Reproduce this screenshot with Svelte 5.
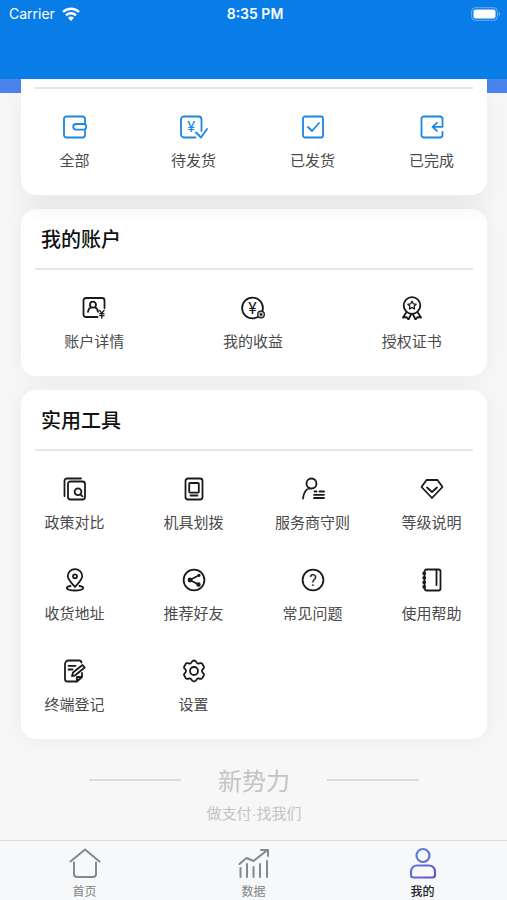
<script>
  // circle as a path, so every icon stays a plain list of path data
  const c = (x, y, r) => `M${x - r} ${y}a${r} ${r} 0 1 0 ${2 * r} 0a${r} ${r} 0 1 0 ${-2 * r} 0z`;

  // 24x24 icons: line = stroked, solid = filled, sign = character inside the icon
  const icons = {
    wallet: { line: 'M22 8V4a2.500 2.500 0 0 0-2.500-2.500H3.500A2.500 2.500 0 0 0 1 4v16a2.500 2.500 0 0 0 2.500 2.500h16A2.500 2.500 0 0 0 22 20v-4M13 9h7.500a2.800 2.800 0 0 1 0 5.600H13a2.800 2.800 0 0 1 0-5.600z' },
    pending: { line: 'M15.500 22.500H4A3 3 0 0 1 1 19.500v-15a3 3 0 0 1 3-3h14.500a3 3 0 0 1 3 3V16M16 17.500l5 5L27 14', sign: ['¥', 11.3, 17, 15], wide: true },
    shipped: { line: 'M4 1.500h16a2 2 0 0 1 2 2v17a2 2 0 0 1-2 2H4a2 2 0 0 1-2-2v-17a2 2 0 0 1 2-2zM7 12l4 4 7-8' },
    done: { line: 'M22.500 11.800V4A2.500 2.500 0 0 0 20 1.500H4A2.500 2.500 0 0 0 1.500 4v16A2.500 2.500 0 0 0 4 22.500h16a2.500 2.500 0 0 0 2.500-2.500v-3M22.500 11.800h-9M17 7.800l-4.500 4 4.500 4' },
    account: { line: `M22.500 12V4.500A2.500 2.500 0 0 0 20 2H4a2.500 2.500 0 0 0-2.500 2.500v14A2.500 2.500 0 0 0 4 21h11.500${c(11, 8.7, 3)}M6 15.800c.4-2.500 1.600-4 3.500-4.600M16 15.800c-.4-2.500-1.600-4-3.500-4.600`, mark: 'M17.500 14.300l2.300 2.700 2.300-2.700M19.800 17v5.200M17.700 17.700H22M17.700 19.700H22' },
    income: { line: c(11.5, 12, 10.4), sign: ['¥', 11.5, 17.5, 16], badge: true },
    medal: { line: `${c(12, 9.5, 8.3)}M6.500 16L3 21.500l3.500-.3 2 2.300 2.500-5M17.500 16l3.500 5.500-3.500-.3-2 2.300-2.500-5`, mark: 'M12 5.300l1.300 2.500 2.800.4-2 2 .5 2.800-2.600-1.300L9.400 13l.5-2.800-2-2 2.800-.4z' },
    compare: { line: `M7.500 4.500h12A2.500 2.500 0 0 1 22 7v13a2.500 2.500 0 0 1-2.500 2.500h-12A2.500 2.500 0 0 1 5 20V7a2.500 2.500 0 0 1 2.500-2.500zM1.500 19V4A2.500 2.500 0 0 1 4 1.500h14${c(15, 14.8, 3.4)}M17.500 17.500l2 1.800` },
    machine: { line: 'M6 1.500h12A2.500 2.500 0 0 1 20.500 4v16a2.500 2.500 0 0 1-2.500 2.500H6A2.500 2.500 0 0 1 3.500 20V4A2.500 2.500 0 0 1 6 1.500zM8 6h8a.8.800 0 0 1 .8.800v8a.8.800 0 0 1-.8.800H8a.8.800 0 0 1-.8-.8v-8A.8.800 0 0 1 8 6zM8.500 18.500h7' },
    rules: { line: `${c(10.5, 6.5, 5)}M8.500 11C4.500 12.500 2.500 16.500 2 21.500M13.500 14.500h2M18.500 14.500H23M13 17.800h10M13 21h10` },
    level: { line: 'M6.500 3h11l5 7L12 21 1.500 10zM7 10.500l5 4.500 5-4.500' },
    address: { line: `M12 19C7.500 14 4.800 11.500 4.800 8.300a7.200 7.200 0 0 1 14.400 0c0 3.200-2.700 5.700-7.200 10.700z${c(12, 8.3, 2)}M7.500 18c-6 .8-5 4.500 4.500 4.500s10.500-3.700 4.500-4.500` },
    share: { line: `${c(12, 12, 10.4)}M17 7.300L8 12l8.500 4.500`, solid: c(17, 7.3, 1.6) + c(8, 12, 2.4) + c(16.5, 16.5, 2.2) },
    question: { line: c(12, 12, 10.4), sign: ['?', 12, 17.5, 16] },
    manual: { line: 'M6.500 1.500h12A2 2 0 0 1 20.500 3.500v17a2 2 0 0 1-2 2h-12a2 2 0 0 1-2-2v-17a2 2 0 0 1 2-2zM16.500 2v15', solid: c(4.2, 5.3, 1.9) + c(4.2, 9.8, 1.9) + c(4.2, 14.3, 1.9) + c(4.2, 18.8, 1.9) },
    register: { line: 'M18.500 3.500a2.500 2.500 0 0 0-2.500-2H5.500A3.500 3.500 0 0 0 2 5v15a2.500 2.500 0 0 0 2.500 2.500H14l5-4.500v-4M5.500 6.800h7M5.500 10.500h4M9 17l1-3.500L19.500 6l2.200 2.500-9.500 7.800zM14 22v-4h5' },
    gear: { line: `M10.300 2.300Q12 .7 13.700 2.300L15 4q.6.700 1.600.500l2-.4q1-.2 1.600.7l1.600 2.800q.5 1-.2 1.700l-1.200 1.500q-.8 1.200 0 2.400l1.200 1.500q.7.700.2 1.700l-1.600 2.800q-.6.900-1.600.7l-2-.4q-1-.2-1.600.5l-1.300 1.700q-1.700 1.600-3.400 0L9 20q-.6-.7-1.600-.5l-2 .4q-1 .2-1.600-.7l-1.600-2.800q-.5-1 .2-1.700l1.200-1.500q.8-1.200 0-2.400L2.400 9.300q-.7-.7-.2-1.700l1.600-2.800q.6-.9 1.600-.7l2 .4Q8.400 4.700 9 4z${c(12, 12, 4)}` }
  };

  const orders = [
    ['wallet', '全部'],
    ['pending', '待发货'],
    ['shipped', '已发货'],
    ['done', '已完成']
  ];
  const account = [
    ['account', '账户详情'],
    ['income', '我的收益'],
    ['medal', '授权证书']
  ];
  const tools = [
    ['compare', '政策对比'],
    ['machine', '机具划拨'],
    ['rules', '服务商守则'],
    ['level', '等级说明'],
    ['address', '收货地址'],
    ['share', '推荐好友'],
    ['question', '常见问题'],
    ['manual', '使用帮助'],
    ['register', '终端登记'],
    ['gear', '设置']
  ];
  const tabs = [
    ['home', '首页'],
    ['data', '数据'],
    ['mine', '我的']
  ];
  let active = $state('mine');
</script>

{#snippet entries(list)}
  <div class="grid" class:three={list.length === 3}>
    {#each list as [name, label]}
      {@const icon = icons[name]}
      <button class="entry">
        <svg class:wide={icon.wide} viewBox="0 0 {icon.wide ? 28 : 24} 24" aria-hidden="true">
          {#if icon.sign}
            <text x={icon.sign[1]} y={icon.sign[2]} font-size={icon.sign[3]}>{icon.sign[0]}</text>
          {/if}
          <path class="line" d={icon.line} />
          {#if icon.mark}<path class="line thin" d={icon.mark} />{/if}
          {#if icon.solid}<path class="solid" d={icon.solid} />{/if}
          {#if icon.badge}
            <circle class="badge" cx="20" cy="18.5" r="3.4" />
            <circle class="solid" cx="20" cy="18.5" r="1.2" />
          {/if}
        </svg>
        <span>{label}</span>
      </button>
    {/each}
  </div>
{/snippet}

<div class="page">
  <header>
    <div class="status">
      <span class="carrier">
        Carrier
        <svg width="18" height="14" viewBox="0 0 18 14" aria-hidden="true">
          <path d="M1 5a11.500 11.500 0 0 1 16 0M4 8.300a7.300 7.300 0 0 1 10 0" fill="none" stroke="#fff" stroke-width="2.400" />
          <path d="M9 14l-3-3.200a4.400 4.400 0 0 1 6 0z" fill="#fff" />
        </svg>
      </span>
      <strong>8:35 PM</strong>
      <svg class="battery" width="30" height="14" viewBox="0 0 30 14" aria-hidden="true">
        <rect x=".7" y=".7" width="25.600" height="12.600" rx="3.500" fill="none" stroke="#fff" stroke-opacity=".4" />
        <rect x="2.500" y="2.500" width="22" height="9" rx="2" fill="#fff" />
        <path d="M27.800 5v4c1.500-.7 1.500-3.300 0-4z" fill="#fff" fill-opacity=".5" />
      </svg>
    </div>
  </header>

  <main>
    <section class="card orders">
      {@render entries(orders)}
    </section>
    <section class="card">
      <h2>我的账户</h2>
      {@render entries(account)}
    </section>
    <section class="card">
      <h2>实用工具</h2>
      {@render entries(tools)}
    </section>
    <footer>
      <p class="brand">新势力</p>
      <p class="slogan">做支付·找我们</p>
    </footer>
  </main>

  <nav>
    {#each tabs as [id, label]}
      <button class="tab" class:active={active === id} onclick={() => (active = id)}>
        <svg viewBox="0 0 32 32" aria-hidden="true">
          {#if id === 'home'}
            <path d="M1.500 14.500L16 2.500l14.500 12M5 15.500V27a3 3 0 0 0 3 3h16a3 3 0 0 0 3-3V15.500" />
          {:else if id === 'data'}
            <path d="M2.500 21v9M9 17v13M15.500 20v10M22 17v13M29 14v16M1.500 17l7-6 7 3L29.500 3M23 3h7v6" />
          {:else}
            <defs>
              <linearGradient id="mine" x1="0" y1="0" x2="1" y2="1">
                <stop offset="0" stop-color="#5b8ae6" />
                <stop offset="1" stop-color="#6a50c0" />
              </linearGradient>
            </defs>
            <path class="person" d="{c(16, 8.5, 6.5)}M10 18.500h12a6 6 0 0 1 6 6V28a2.500 2.500 0 0 1-2.500 2.500h-19A2.500 2.500 0 0 1 4 28v-3.500a6 6 0 0 1 6-6z" />
          {/if}
        </svg>
        <span>{label}</span>
      </button>
    {/each}
  </nav>
</div>

<style>
  :global(body) { margin: 0; background: #f7f7f7; }
  .page {
    display: flex;
    flex-direction: column;
    min-height: 100vh;
    font-family: "Noto Sans CJK SC", sans-serif;
    color: #4a4a4a;
  }
  button { border: 0; padding: 0; background: none; font: inherit; color: inherit; cursor: pointer; }

  header { height: 79px; background: #087de8; color: #fff; }
  .status {
    display: grid;
    grid-template-columns: 1fr auto 1fr;
    align-items: center;
    height: 28px;
    padding: 0 6px 0 9px;
    font: 14px/20px Inter, sans-serif;
  }
  .status strong { font-weight: 600; }
  .carrier { display: flex; align-items: center; gap: 7px; }
  .battery { justify-self: end; }

  main {
    flex: 1;
    padding: 0 20px 0 21px;
    background: linear-gradient(#4b83ec, #4b83ec) top / 100% 14px no-repeat;
  }
  .card {
    margin-bottom: 14px;
    padding: 0 14px 25px;
    border-radius: 15px;
    background: #fff;
    box-shadow: 0 0 24px rgba(0, 0, 0, 0.05);
  }
  .orders {
    padding-top: 8px;
    border-radius: 0 0 15px 15px;
    clip-path: inset(0 -24px -24px -24px);
    box-shadow: 0 14px 24px rgba(0, 0, 0, 0.05);
  }
  h2 { margin: 0; padding: 0 6px; font-size: 20px; font-weight: 500; line-height: 59px; color: #111; }

  .grid {
    display: grid;
    grid-template-columns: repeat(4, 1fr);
    row-gap: 36px;
    position: relative;
    margin: 0 -18px 0 -20px;
    padding-top: 28px;
  }
  .grid.three { grid-template-columns: repeat(3, 1fr); }
  .grid::before {
    content: "";
    position: absolute;
    top: 0;
    left: 20px;
    right: 18px;
    height: 2px;
    background: #e6e6e6;
  }
  .entry { display: flex; flex-direction: column; align-items: center; gap: 11px; color: #4a4a4a; }
  .entry span { font-size: 15px; line-height: 20px; white-space: nowrap; }
  .entry svg { width: 24px; height: 24px; color: #1a1a1a; }
  .entry svg.wide { width: 28px; }
  .orders .entry svg { color: #1c86e3; }
  .line { fill: none; stroke: currentColor; stroke-width: 1.8; stroke-linecap: round; stroke-linejoin: round; }
  .thin { stroke-width: 1.3; }
  .solid { fill: currentColor; }
  .badge { fill: #bbb; stroke: currentColor; stroke-width: 1.2; }
  .entry text { fill: currentColor; font-family: Roboto, sans-serif; font-weight: 400; text-anchor: middle; }

  footer { padding: 9px 0 14px; text-align: center; color: #c4c4c4; }
  footer p { margin: 0; }
  .brand { display: flex; justify-content: center; align-items: center; gap: 37px; font-size: 24px; line-height: 36px; }
  .brand::before, .brand::after { content: ""; width: 92px; height: 2px; background: #dcdcdc; }
  .slogan { margin-top: 6px; font-family: "Liberation Sans", "Noto Sans CJK SC", sans-serif; font-size: 15px; line-height: 20px; }

  nav { display: grid; grid-template-columns: repeat(3, 1fr); border-top: 1px solid #dcdcdc; background: #f7f8f9; }
  .tab { display: flex; flex-direction: column; align-items: center; gap: 4px; padding: 6px 0 1px; color: #7f8387; }
  .tab span { font-size: 12px; line-height: 16px; }
  .tab svg { width: 32px; height: 32px; }
  .tab path { fill: none; stroke: #85898d; stroke-width: 2; stroke-linecap: round; stroke-linejoin: round; }
  .tab path.person { stroke: url(#mine); stroke-width: 2.2; }
  .tab.active { color: #222; font-weight: 500; }
</style>
